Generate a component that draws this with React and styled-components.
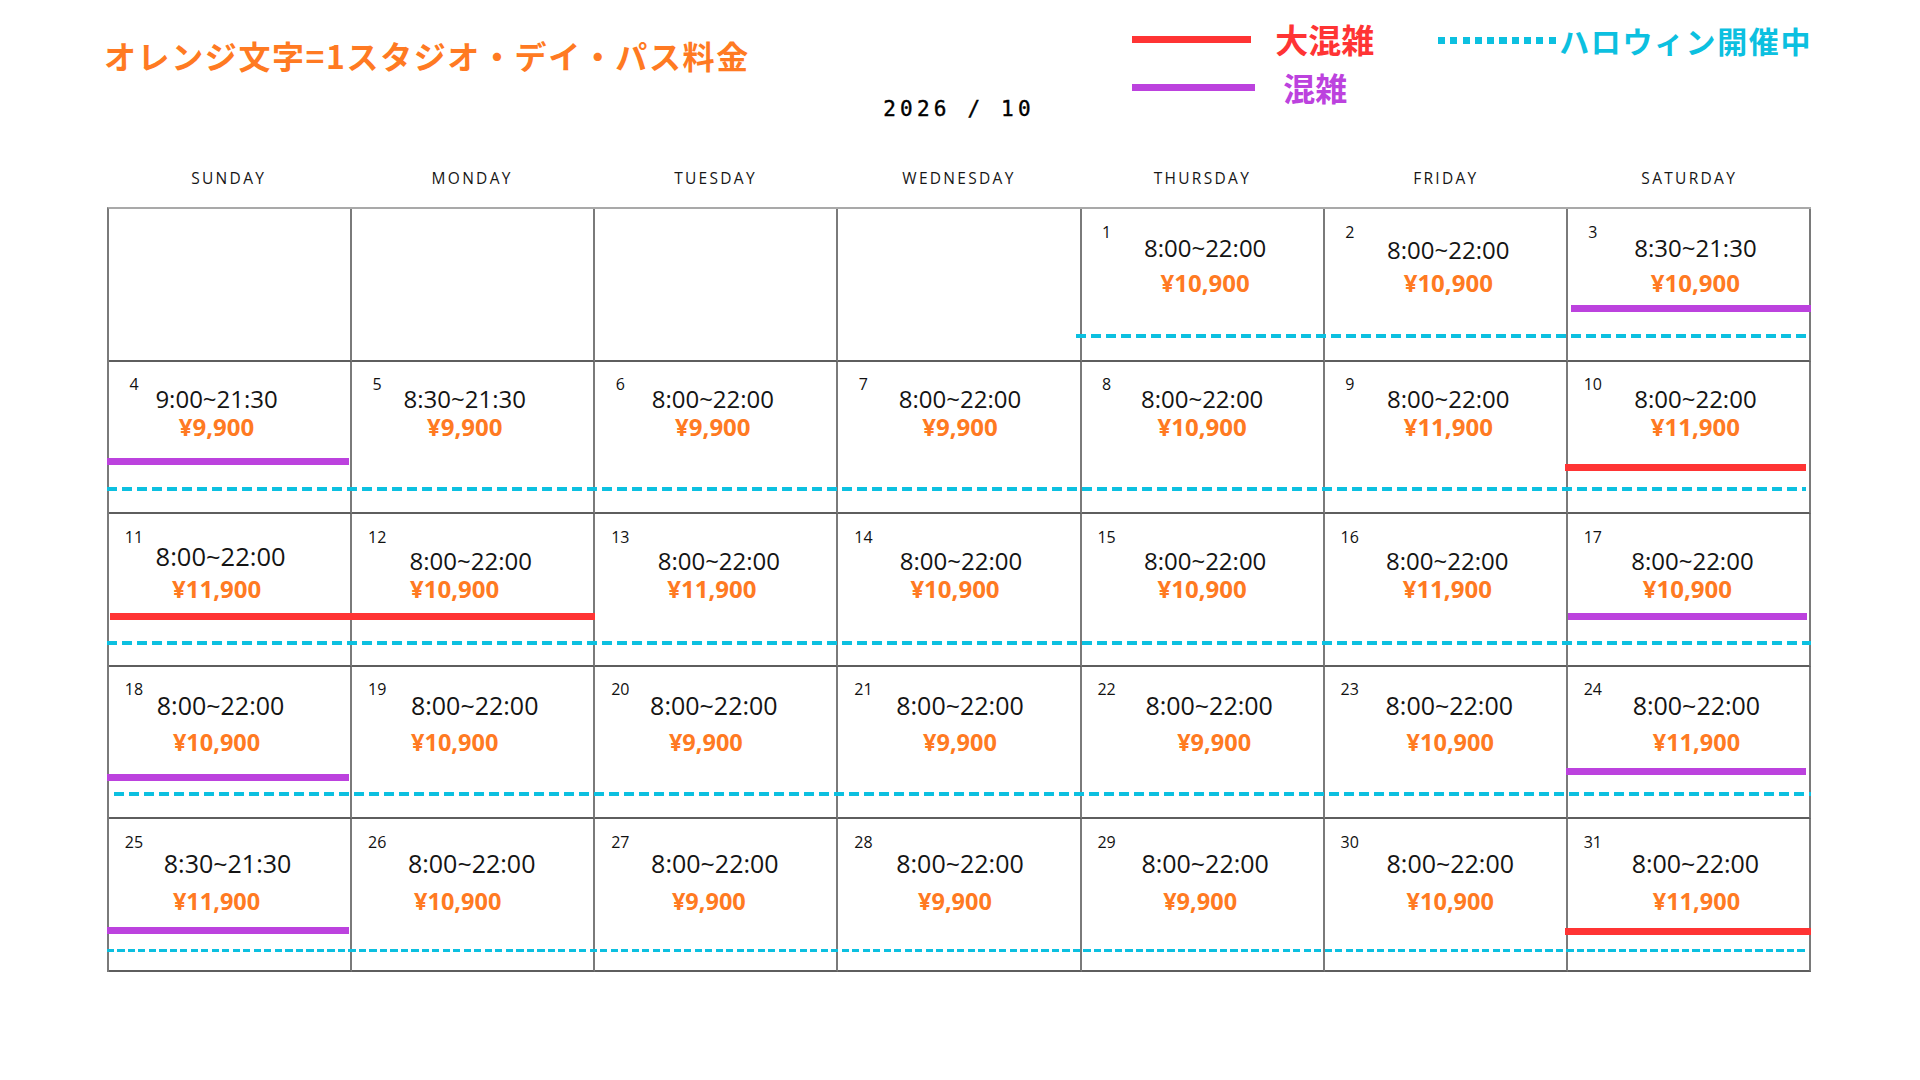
import React from "react";
import styled, { createGlobalStyle } from "styled-components";

const ORANGE = "#ff7a22";
const RED = "#ff3434";
const PURPLE = "#bc42de";
const CYAN = "#0cc0e0";
const JP = `"Noto Sans CJK JP", "Noto Sans", sans-serif`;

const GlobalStyle = createGlobalStyle`
  html, body { margin: 0; padding: 0; background: #fff; }
  body { font-family: "Open Sans", "Noto Sans", sans-serif; color: #111; }
`;

const Page = styled.div`
  width: 1920px;
  height: 1080px;
  box-sizing: border-box;
  padding: 0 109px 0 107px;
  overflow: hidden;
  background: #fff;
`;

const TopBar = styled.header`
  height: 160px;
  display: grid;
  grid-template-columns: 1fr auto 1fr;
  align-items: start;
`;

const Title = styled.h1`
  margin: 35px 0 0 -3px;
  font-family: ${JP};
  font-weight: 700;
  font-size: 32px;
  line-height: 40px;
  letter-spacing: 1.6px;
  color: ${ORANGE};
  white-space: nowrap;
`;

const Month = styled.div`
  margin-top: 97px;
  font-family: "DejaVu Sans Mono", monospace;
  font-weight: 400;
  font-size: 21px;
  line-height: 24px;
  letter-spacing: 4.2px;
  color: #000;
  -webkit-text-stroke: 0.4px #000;
  white-space: pre;
`;

const Legend = styled.div`
  justify-self: end;
  margin-top: 19px;
  margin-right: -1px;
  display: flex;
  gap: 64px;
  align-items: flex-start;
`;

const LegendCol = styled.div`
  display: flex;
  flex-direction: column;
  gap: 8px;
  margin-top: ${(p) => p.$mt || 0}px;
`;

const LegendItem = styled.div`
  display: flex;
  align-items: center;
  gap: ${(p) => p.$gap}px;
  height: 40px;
`;

const Swatch = styled.span`
  display: block;
  width: ${(p) => p.$w}px;
  height: 7px;
  background: ${(p) => p.$color};
`;

const Dots = styled.span`
  display: block;
  width: 118px;
  height: 7px;
  background: repeating-linear-gradient(
    to right,
    ${CYAN} 0 7px,
    transparent 7px 12.3px
  );
`;

const LegendLabel = styled.span`
  font-family: ${JP};
  font-weight: 700;
  font-size: ${(p) => p.$fs || 32}px;
  letter-spacing: ${(p) => p.$ls || 0}px;
  line-height: 40px;
  color: ${(p) => p.$color};
  white-space: nowrap;
`;

const DayHeads = styled.div`
  display: grid;
  grid-template-columns: repeat(7, 1fr);
  height: 47px;
`;

const DayHead = styled.div`
  text-align: center;
  padding-top: 8px;
  font-size: 15.5px;
  line-height: 20px;
  letter-spacing: 2.3px;
  color: #161616;
`;

const Calendar = styled.div`
  border-top: 2px solid #a9a9a9;
  border-left: 2px solid #7a7a7a;
`;

const Week = styled.div`
  position: relative;
  display: grid;
  grid-template-columns: repeat(7, 1fr);
  height: 152.6px;
`;

const Cell = styled.div`
  position: relative;
  display: flex;
  flex-direction: column;
  align-items: center;
  min-width: 0;
  border-right: 2px solid #7a7a7a;
  border-bottom: 2px solid #5e5e5e;
`;

const DayNum = styled.div`
  align-self: flex-start;
  width: 22px;
  margin: 14.5px 0 0 14px;
  text-align: center;
  font-size: 16px;
  line-height: 16px;
  color: #111;
`;

const Time = styled.div`
  margin-top: ${(p) => p.$mt}px;
  margin-left: ${(p) => p.$dx * 2}px;
  font-size: ${(p) => p.$fs}px;
  line-height: 26px;
  color: #141414;
  white-space: nowrap;
`;

const Price = styled.div`
  margin-top: ${(p) => p.$mt}px;
  margin-left: ${(p) => p.$dx * 2}px;
  font-size: ${(p) => p.$fs}px;
  font-weight: 700;
  line-height: 26px;
  color: ${ORANGE};
  white-space: nowrap;
`;

const Bar = styled.span`
  position: absolute;
  z-index: 1;
  top: ${(p) => p.$top}px;
  left: ${(p) => p.$l}px;
  right: ${(p) => p.$r}px;
  height: 7px;
  background: ${(p) => p.$color};
`;

const Halloween = styled.span`
  position: absolute;
  z-index: 2;
  top: ${(p) => p.$top}px;
  left: ${(p) => p.$left};
  right: ${(p) => p.$right}px;
  height: ${(p) => p.$h}px;
  background: repeating-linear-gradient(
    to right,
    ${CYAN} 0 ${(p) => p.$dash}px,
    transparent ${(p) => p.$dash}px ${(p) => p.$period}px
  );
`;

const DAYS = ["SUNDAY", "MONDAY", "TUESDAY", "WEDNESDAY", "THURSDAY", "FRIDAY", "SATURDAY"];

const A = "8:00~22:00";
const B = "8:30~21:30";

const rows = [
  {
    tmt: -5, pmt: 9, tfs: 24, pfs: 24,
    hw: { left: "calc(400% / 7 - 6px)", right: 0, top: 124.5, h: 4, dash: 10, period: 15 },
    days: [
      null, null, null, null,
      { d: 1, time: A, price: "¥10,900", t: 3, p: 3 },
      { d: 2, time: A, price: "¥10,900", t: 3, p: 3, ty: 2 },
      { d: 3, time: B, price: "¥10,900", t: 7, p: 7, bar: { c: PURPLE, top: 96, l: 3, r: -2 } },
    ],
  },
  {
    tmt: -6, pmt: 2, tfs: 24, pfs: 24,
    hw: { left: "-2px", right: 5, top: 125, h: 4, dash: 10, period: 15 },
    days: [
      { d: 4, time: "9:00~21:30", price: "¥9,900", t: -13, p: -13, bar: { c: PURPLE, top: 96.5, l: -2, r: 1 } },
      { d: 5, time: B, price: "¥9,900", t: -8, p: -8 },
      { d: 6, time: A, price: "¥9,900", t: -3, p: -3 },
      { d: 7, time: A, price: "¥9,900", t: 1, p: 1 },
      { d: 8, time: A, price: "¥10,900", t: 0, p: 0 },
      { d: 9, time: A, price: "¥11,900", t: 3, p: 3 },
      { d: 10, time: A, price: "¥11,900", t: 7, p: 7, bar: { c: RED, top: 102, l: -3, r: 3 } },
    ],
  },
  {
    tmt: 3, pmt: 2, tfs: 24, pfs: 24,
    hw: { left: "-2px", right: 0, top: 127, h: 4, dash: 10, period: 15 },
    days: [
      { d: 11, time: A, price: "¥11,900", t: -9, p: -13, ty: -5, fs: 25.5, bar: { c: RED, top: 98.5, l: 1, r: -2 } },
      { d: 12, time: A, price: "¥10,900", t: -2, p: -18, bar: { c: RED, top: 98.5, l: 0, r: -2 } },
      { d: 13, time: A, price: "¥11,900", t: 3, p: -4 },
      { d: 14, time: A, price: "¥10,900", t: 2, p: -4 },
      { d: 15, time: A, price: "¥10,900", t: 3, p: 0 },
      { d: 16, time: A, price: "¥11,900", t: 2, p: 2 },
      { d: 17, time: A, price: "¥10,900", t: 4, p: -1, bar: { c: PURPLE, top: 98.5, l: 0, r: 2 } },
    ],
  },
  {
    tmt: -5.5, pmt: 11, tfs: 25, pfs: 23.5,
    hw: { left: "5px", right: 0, top: 125.5, h: 4, dash: 10, period: 15 },
    days: [
      { d: 18, time: A, price: "¥10,900", t: -9, p: -13, bar: { c: PURPLE, top: 107.5, l: -2, r: 1 } },
      { d: 19, time: A, price: "¥10,900", t: 2, p: -18 },
      { d: 20, time: A, price: "¥9,900", t: -2, p: -10 },
      { d: 21, time: A, price: "¥9,900", t: 1, p: 1 },
      { d: 22, time: A, price: "¥9,900", t: 7, p: 12 },
      { d: 23, time: A, price: "¥10,900", t: 4, p: 5 },
      { d: 24, time: A, price: "¥11,900", t: 8, p: 8, bar: { c: PURPLE, top: 101.5, l: -2, r: 3 } },
    ],
  },
  {
    tmt: 0.5, pmt: 12, tfs: 25, pfs: 23.5,
    hw: { left: "-2px", right: 5, top: 130, h: 3, dash: 7, period: 10.5 },
    days: [
      { d: 25, time: B, price: "¥11,900", t: -2, p: -13, bar: { c: PURPLE, top: 107.5, l: -2, r: 1 } },
      { d: 26, time: A, price: "¥10,900", t: -1, p: -15 },
      { d: 27, time: A, price: "¥9,900", t: -1, p: -7 },
      { d: 28, time: A, price: "¥9,900", t: 1, p: -4 },
      { d: 29, time: A, price: "¥9,900", t: 3, p: -2 },
      { d: 30, time: A, price: "¥10,900", t: 5, p: 5 },
      { d: 31, time: A, price: "¥11,900", t: 7, p: 8, bar: { c: RED, top: 108.5, l: -3, r: -2 } },
    ],
  },
];

function DayCell({ day, row }) {
  if (!day) return <Cell />;
  const ty = day.ty || 0;
  return (
    <Cell>
      <DayNum>{day.d}</DayNum>
      <Time $mt={row.tmt + ty} $dx={day.t} $fs={day.fs || row.tfs}>
        {day.time}
      </Time>
      <Price $mt={row.pmt - ty} $dx={day.p} $fs={row.pfs}>
        {day.price}
      </Price>
      {day.bar && (
        <Bar $color={day.bar.c} $top={day.bar.top} $l={day.bar.l} $r={day.bar.r} />
      )}
    </Cell>
  );
}

export default function App() {
  return (
    <>
      <GlobalStyle />
      <Page>
        <TopBar>
          <Title>オレンジ文字=1スタジオ・デイ・パス料金</Title>
          <Month>2026 / 10</Month>
          <Legend>
            <LegendCol>
              <LegendItem $gap={24}>
                <Swatch $w={119} $color={RED} />
                <LegendLabel $color={RED} $fs={33}>大混雑</LegendLabel>
              </LegendItem>
              <LegendItem $gap={28}>
                <Swatch $w={123} $color={PURPLE} />
                <LegendLabel $color={PURPLE}>混雑</LegendLabel>
              </LegendItem>
            </LegendCol>
            <LegendCol $mt={1}>
              <LegendItem $gap={3}>
                <Dots />
                <LegendLabel $color={CYAN} $fs={30} $ls={1.6}>
                  ハロウィン開催中
                </LegendLabel>
              </LegendItem>
            </LegendCol>
          </Legend>
        </TopBar>
        <DayHeads>
          {DAYS.map((d) => (
            <DayHead key={d}>{d}</DayHead>
          ))}
        </DayHeads>
        <Calendar>
          {rows.map((row, i) => (
            <Week key={i}>
              {row.days.map((day, j) => (
                <DayCell key={j} day={day} row={row} />
              ))}
              <Halloween
                $left={row.hw.left}
                $right={row.hw.right}
                $top={row.hw.top}
                $h={row.hw.h}
                $dash={row.hw.dash}
                $period={row.hw.period}
              />
            </Week>
          ))}
        </Calendar>
      </Page>
    </>
  );
}
